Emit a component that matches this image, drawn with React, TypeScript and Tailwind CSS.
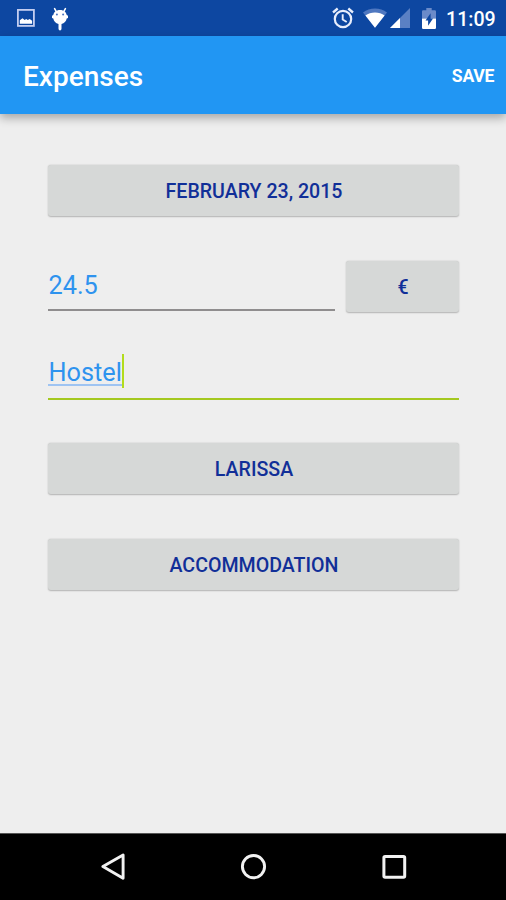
import React, { useState } from 'react';

interface ButtonProps {
  label: string;
  className?: string;
}

const FormButton: React.FC<ButtonProps> = ({ label, className = 'w-full' }) => (
  <button
    className={`${className} h-[51px] rounded-[3px] bg-[#d6d8d7] pt-[2px] pl-px text-[19.6px] leading-none font-medium text-[#112f98] uppercase shadow-[0_0.5px_1.5px_rgba(0,0,0,0.25)]`}
  >
    {label}
  </button>
);

const PictureIcon = () => (
  <svg width="18" height="18" viewBox="0 0 18 18" className="shrink-0">
    <rect x="0.9" y="0.9" width="16" height="16" fill="none" stroke="#c3cdf0" strokeWidth="1.8" />
    <path d="M2.800 14.800v-3.600l2.700-2 2.200 1.700 1.500-1 1.600 1.100 1.900-1 2.400 1.800v3z" fill="#fff" />
  </svg>
);

const AndroidIcon = () => (
  <svg width="18" height="24" viewBox="0 0 18 24" className="shrink-0">
    <path d="M3.600 1.600l1.800 3.200M14.400 1.600l-1.800 3.200" stroke="#fff" strokeWidth="1.600" strokeLinecap="round" />
    <path d="M9 2.900c4 0 6.400 2.300 6.700 5.200l1.300.6v2.400l-1.300.5c-.5 2.700-2.400 4.800-5.200 5.300v4.600c0 1.100-.5 1.900-1.500 1.900s-1.500-.8-1.500-1.900v-4.600c-2.800-.5-4.700-2.600-5.200-5.300L1 11.100V8.700l1.300-.6C2.600 5.200 5 2.900 9 2.900z" fill="#fff" />
    <circle cx="5.900" cy="7.600" r="1" fill="#4c74be" />
    <circle cx="12.100" cy="7.600" r="1" fill="#4c74be" />
  </svg>
);

const AlarmIcon = () => (
  <svg width="22" height="22" viewBox="0 0 22 22" className="shrink-0" fill="none" stroke="#e8eefc">
    <circle cx="11" cy="12" r="8.200" strokeWidth="2.200" />
    <path d="M1 5.500l4.700-4M21 5.500l-4.700-4" strokeWidth="2.300" />
    <path d="M10.700 7.200v5.300l4 2.500" strokeWidth="1.900" />
  </svg>
);

const WifiIcon = () => (
  <svg width="24" height="20" viewBox="0 0 24 20" className="shrink-0">
    <path d="M0 4.500C3.400 1.900 7.500.5 12 .5s8.600 1.400 12 4L12 19.800z" fill="#4f78c0" />
    <path d="M2.400 7.600C5 5.600 8.300 4.500 12 4.500s7 1.100 9.600 3.100L12 19.800z" fill="#fff" />
  </svg>
);

const SignalIcon = () => (
  <svg width="20" height="20" viewBox="0 0 20 20" className="shrink-0">
    <path d="M20 0v20H0z" fill="#5a80c4" />
    <path d="M10 10v10H0z" fill="#fff" />
  </svg>
);

const BatteryIcon = () => (
  <svg width="14" height="21" viewBox="0 0 14 21" className="shrink-0">
    <path d="M4.300 0h5.400v2.200h3.100A1.200 1.200 0 0 1 14 3.400V10.500H0V3.400a1.200 1.200 0 0 1 1.200-1.200h3.100z" fill="#6b8bc9" />
    <path d="M0 10.500h14v9.300a1.200 1.200 0 0 1-1.200 1.200H1.200A1.200 1.200 0 0 1 0 19.800z" fill="#fff" />
    <path d="M8.600 5.300v5.200h2.400l-4.900 7.200v-5.300H3.500z" fill="#0d47a1" />
  </svg>
);

const StatusBar = () => (
  <div className="flex h-9 items-center bg-[#0d47a1] pr-[11px] pl-[16.5px]">
    <PictureIcon />
    <div className="ml-[16.5px] pt-px">
      <AndroidIcon />
    </div>
    <div className="ml-auto flex items-center">
      <AlarmIcon />
      <div className="ml-[9px]">
        <WifiIcon />
      </div>
      <div className="ml-[3px]">
        <SignalIcon />
      </div>
      <div className="ml-[11.5px]">
        <BatteryIcon />
      </div>
      <span className="ml-[10.5px] w-[49px] pt-[3px] text-right text-[19.6px] leading-none font-medium whitespace-nowrap text-white">11:09</span>
    </div>
  </div>
);

const NavBar = () => (
  <div className="flex h-[67px] items-center justify-center border-t border-[#555] bg-black">
    <button className="flex w-[140.5px] justify-center">
      <svg width="28" height="28" viewBox="0 0 28 28" fill="none" stroke="#f2f2f2" strokeWidth="2.9" strokeLinejoin="round">
        <path d="M24.100 1.900v23.400L3.900 13.600z" />
      </svg>
    </button>
    <button className="flex w-[140.5px] justify-center">
      <svg width="28" height="28" viewBox="0 0 28 28" fill="none" stroke="#f2f2f2" strokeWidth="2.900">
        <circle cx="14.500" cy="13.600" r="11.100" />
      </svg>
    </button>
    <button className="flex w-[140.5px] justify-center">
      <svg width="28" height="28" viewBox="0 0 28 28" fill="none" stroke="#f2f2f2" strokeWidth="3">
        <rect x="3.900" y="3.400" width="20.800" height="20.800" rx="1.200" />
      </svg>
    </button>
  </div>
);

const App: React.FC = () => {
  const [amount] = useState('24.5');
  const [title] = useState('Hostel');

  return (
    <div className="flex h-[900px] w-[506px] flex-col overflow-hidden bg-[#eeeeee] font-['Roboto',sans-serif]">
      <StatusBar />
      <header className="flex h-[78px] shrink-0 items-center justify-between bg-[#2196f3] pr-3 pl-[23px] text-white shadow-[0_4px_9px_rgba(0,0,0,0.3)]">
        <h1 className="pt-1 text-[28px] leading-none font-medium">Expenses</h1>
        <button className="pt-1 text-[17.6px] leading-none font-bold tracking-[-0.3px]">SAVE</button>
      </header>

      <main className="flex flex-1 flex-col px-12 pt-[51px]">
        <div className="flex w-[411px] flex-col">
          <FormButton label="February 23, 2015" />

          <div className="mt-[45px] flex justify-between">
            <div className="flex h-[50px] w-[287px] items-center border-b-2 border-[#8f8d8e] pt-[2px] pl-[0.5px] text-[25.3px] leading-none text-[#2e93ee]">
              {amount}
            </div>
            <FormButton label="€" className="w-[113px]" />
          </div>

          <div className="mt-[42px] flex h-[46px] items-start border-b-2 border-[#a4c81f] text-[25.3px] leading-none text-[#2e93ee]">
            <span className="mt-[7px] flex h-[25px] w-[74px] items-end border-b-2 border-[#9fc4f2] pl-[0.5px]">
              <span className="-mb-px">{title}</span>
            </span>
            {/* text cursor */}
            <span className="h-[34px] w-[2px] bg-[#b3dc1c]" />
          </div>

          <div className="mt-[43px] flex flex-col gap-[45px]">
            <FormButton label="Larissa" />
            <FormButton label="Accommodation" />
          </div>
        </div>
      </main>
      <NavBar />
    </div>
  );
};

export default App;
